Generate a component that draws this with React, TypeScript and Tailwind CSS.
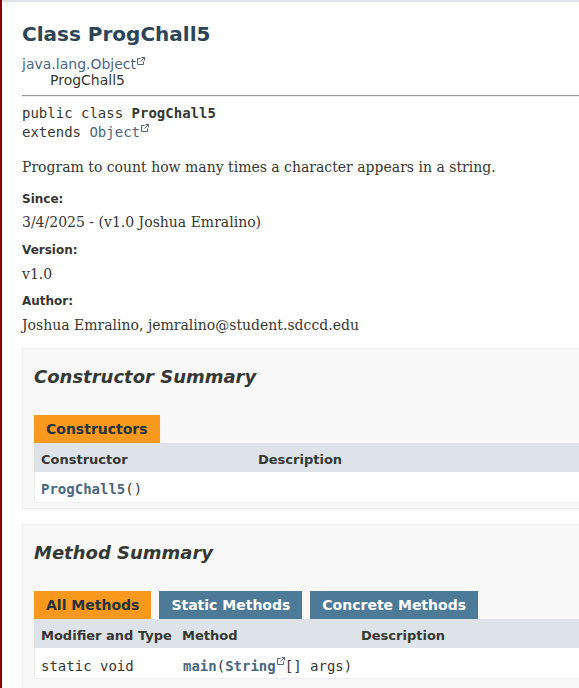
import React from "react";

const sans = { fontFamily: '"DejaVu Sans", "Liberation Sans", sans-serif' };
const serif = { fontFamily: '"DejaVu Serif", "Liberation Serif", serif' };
const mono = { fontFamily: '"DejaVu Sans Mono", "Liberation Mono", monospace' };

function Ext() {
  return (
    <svg width="8" height="8" viewBox="0 0 8 8" className="inline-block align-top ml-[1px] mt-[1px]" fill="none" stroke="#4a6782" strokeWidth="1">
      <path d="M3.5 1.5H0.5V7.5H6.5V4.5" />
      <path d="M4.5 0.5H7.5V3.5" />
      <path d="M7.5 0.5L3.5 4.5" />
    </svg>
  );
}

function Tab({ label, active }: { label: string; active?: boolean }) {
  return (
    <div
      className={
        "h-[28px] px-[12px] flex items-center text-[14px] font-bold " +
        (active ? "bg-[#f8981d] text-[#253441]" : "bg-[#4d7a97] text-white")
      }
    >
      {label}
    </div>
  );
}

export default function App() {
  return (
    <div className="flex w-[579px] h-[688px] overflow-hidden bg-white text-[#353833]" style={sans}>
      <div className="w-[2px] shrink-0 bg-[#8b0000]" />
      <div className="flex-1 min-w-0 flex flex-col">
        <div className="h-[2px] bg-[#dee3e9] shrink-0" />
        <div className="pl-[20px] w-[640px] shrink-0">
          <div className="mt-[20px] h-[24px] leading-[24px] text-[20px] font-bold text-[#2c4557]">Class ProgChall5</div>
          <div className="mt-[10px] h-[16px] leading-[16px] text-[14px] text-[#4a6782]">
            java.lang.Object<Ext />
          </div>
          <div className="h-[16px] leading-[16px] text-[14px] pl-[28px]">ProgChall5</div>
          <div className="mt-[7px] border-t border-[#9a9a9a] border-b border-b-[#eeeeee]" />
          <div className="mt-[7px] text-[14px] leading-[19px]" style={mono}>
            <div>
              public class <span className="font-bold">ProgChall5</span>
            </div>
            <div>
              extends <span className="text-[#4a6782]">Object</span>
              <Ext />
            </div>
          </div>
          <div className="mt-[16px] h-[18px] leading-[18px] text-[14px]" style={serif}>
            Program to count how many times a character appears in a string.
          </div>
          <div className="mt-[16px] h-[14px] leading-[14px] text-[12px] font-bold">Since:</div>
          <div className="mt-[7px] h-[18px] leading-[18px] text-[14px]" style={serif}>
            3/4/2025 - (v1.0 Joshua Emralino)
          </div>
          <div className="mt-[12px] h-[14px] leading-[14px] text-[12px] font-bold">Version:</div>
          <div className="mt-[8px] h-[18px] leading-[18px] text-[14px]" style={serif}>
            v1.0
          </div>
          <div className="mt-[11px] h-[14px] leading-[14px] text-[12px] font-bold">Author:</div>
          <div className="mt-[8px] h-[18px] leading-[18px] text-[14px]" style={serif}>
            Joshua Emralino, jemralino@student.sdccd.edu
          </div>

          {/* Constructor Summary */}
          <div className="mt-[14px] border border-[#ededed] bg-[#f8f8f8] pl-[11px] pb-[5px]">
            <div className="mt-[17px] h-[22px] leading-[22px] text-[18px] font-bold italic">Constructor Summary</div>
            <div className="mt-[27px] flex">
              <Tab label="Constructors" active />
            </div>
            <div className="border border-t-0 border-[#eeeeee]">
              <div className="h-[29px] pt-[5px] bg-[#dee3e9] flex items-center text-[13px] font-bold -mx-[1px]">
                <div className="w-[217px] pl-[7px]">Constructor</div>
                <div className="pl-[7px]">Description</div>
              </div>
              <div className="h-[30px] pt-[5px] bg-white flex items-center text-[14px]" style={mono}>
                <div className="pl-[6px]">
                  <span className="font-bold text-[#4a6782]">ProgChall5</span>()
                </div>
              </div>
            </div>
          </div>

          {/* Method Summary */}
          <div className="mt-[15px] border border-[#ededed] bg-[#f8f8f8] pl-[11px] pb-[5px]">
            <div className="mt-[17px] h-[22px] leading-[22px] text-[18px] font-bold italic">Method Summary</div>
            <div className="mt-[27px] flex gap-[8px]">
              <Tab label="All Methods" active />
              <Tab label="Static Methods" />
              <Tab label="Concrete Methods" />
            </div>
            <div className="border border-t-0 border-[#eeeeee]">
              <div className="h-[29px] pt-[5px] bg-[#dee3e9] flex items-center text-[13px] font-bold -mx-[1px]">
                <div className="w-[141px] pl-[7px]">Modifier and Type</div>
                <div className="w-[179px] pl-[7px]">Method</div>
                <div className="pl-[7px]">Description</div>
              </div>
              <div className="h-[30px] pt-[6px] bg-white flex items-center text-[14px]" style={mono}>
                <div className="w-[141px] pl-[6px]">static void</div>
                <div className="pl-[7px]">
                  <span className="font-bold text-[#4a6782]">main</span>(
                  <span className="font-bold text-[#4a6782]">String</span>
                  <Ext />[] args)
                </div>
              </div>
            </div>
            <div className="h-[40px]" />
          </div>
        </div>
      </div>
    </div>
  );
}
